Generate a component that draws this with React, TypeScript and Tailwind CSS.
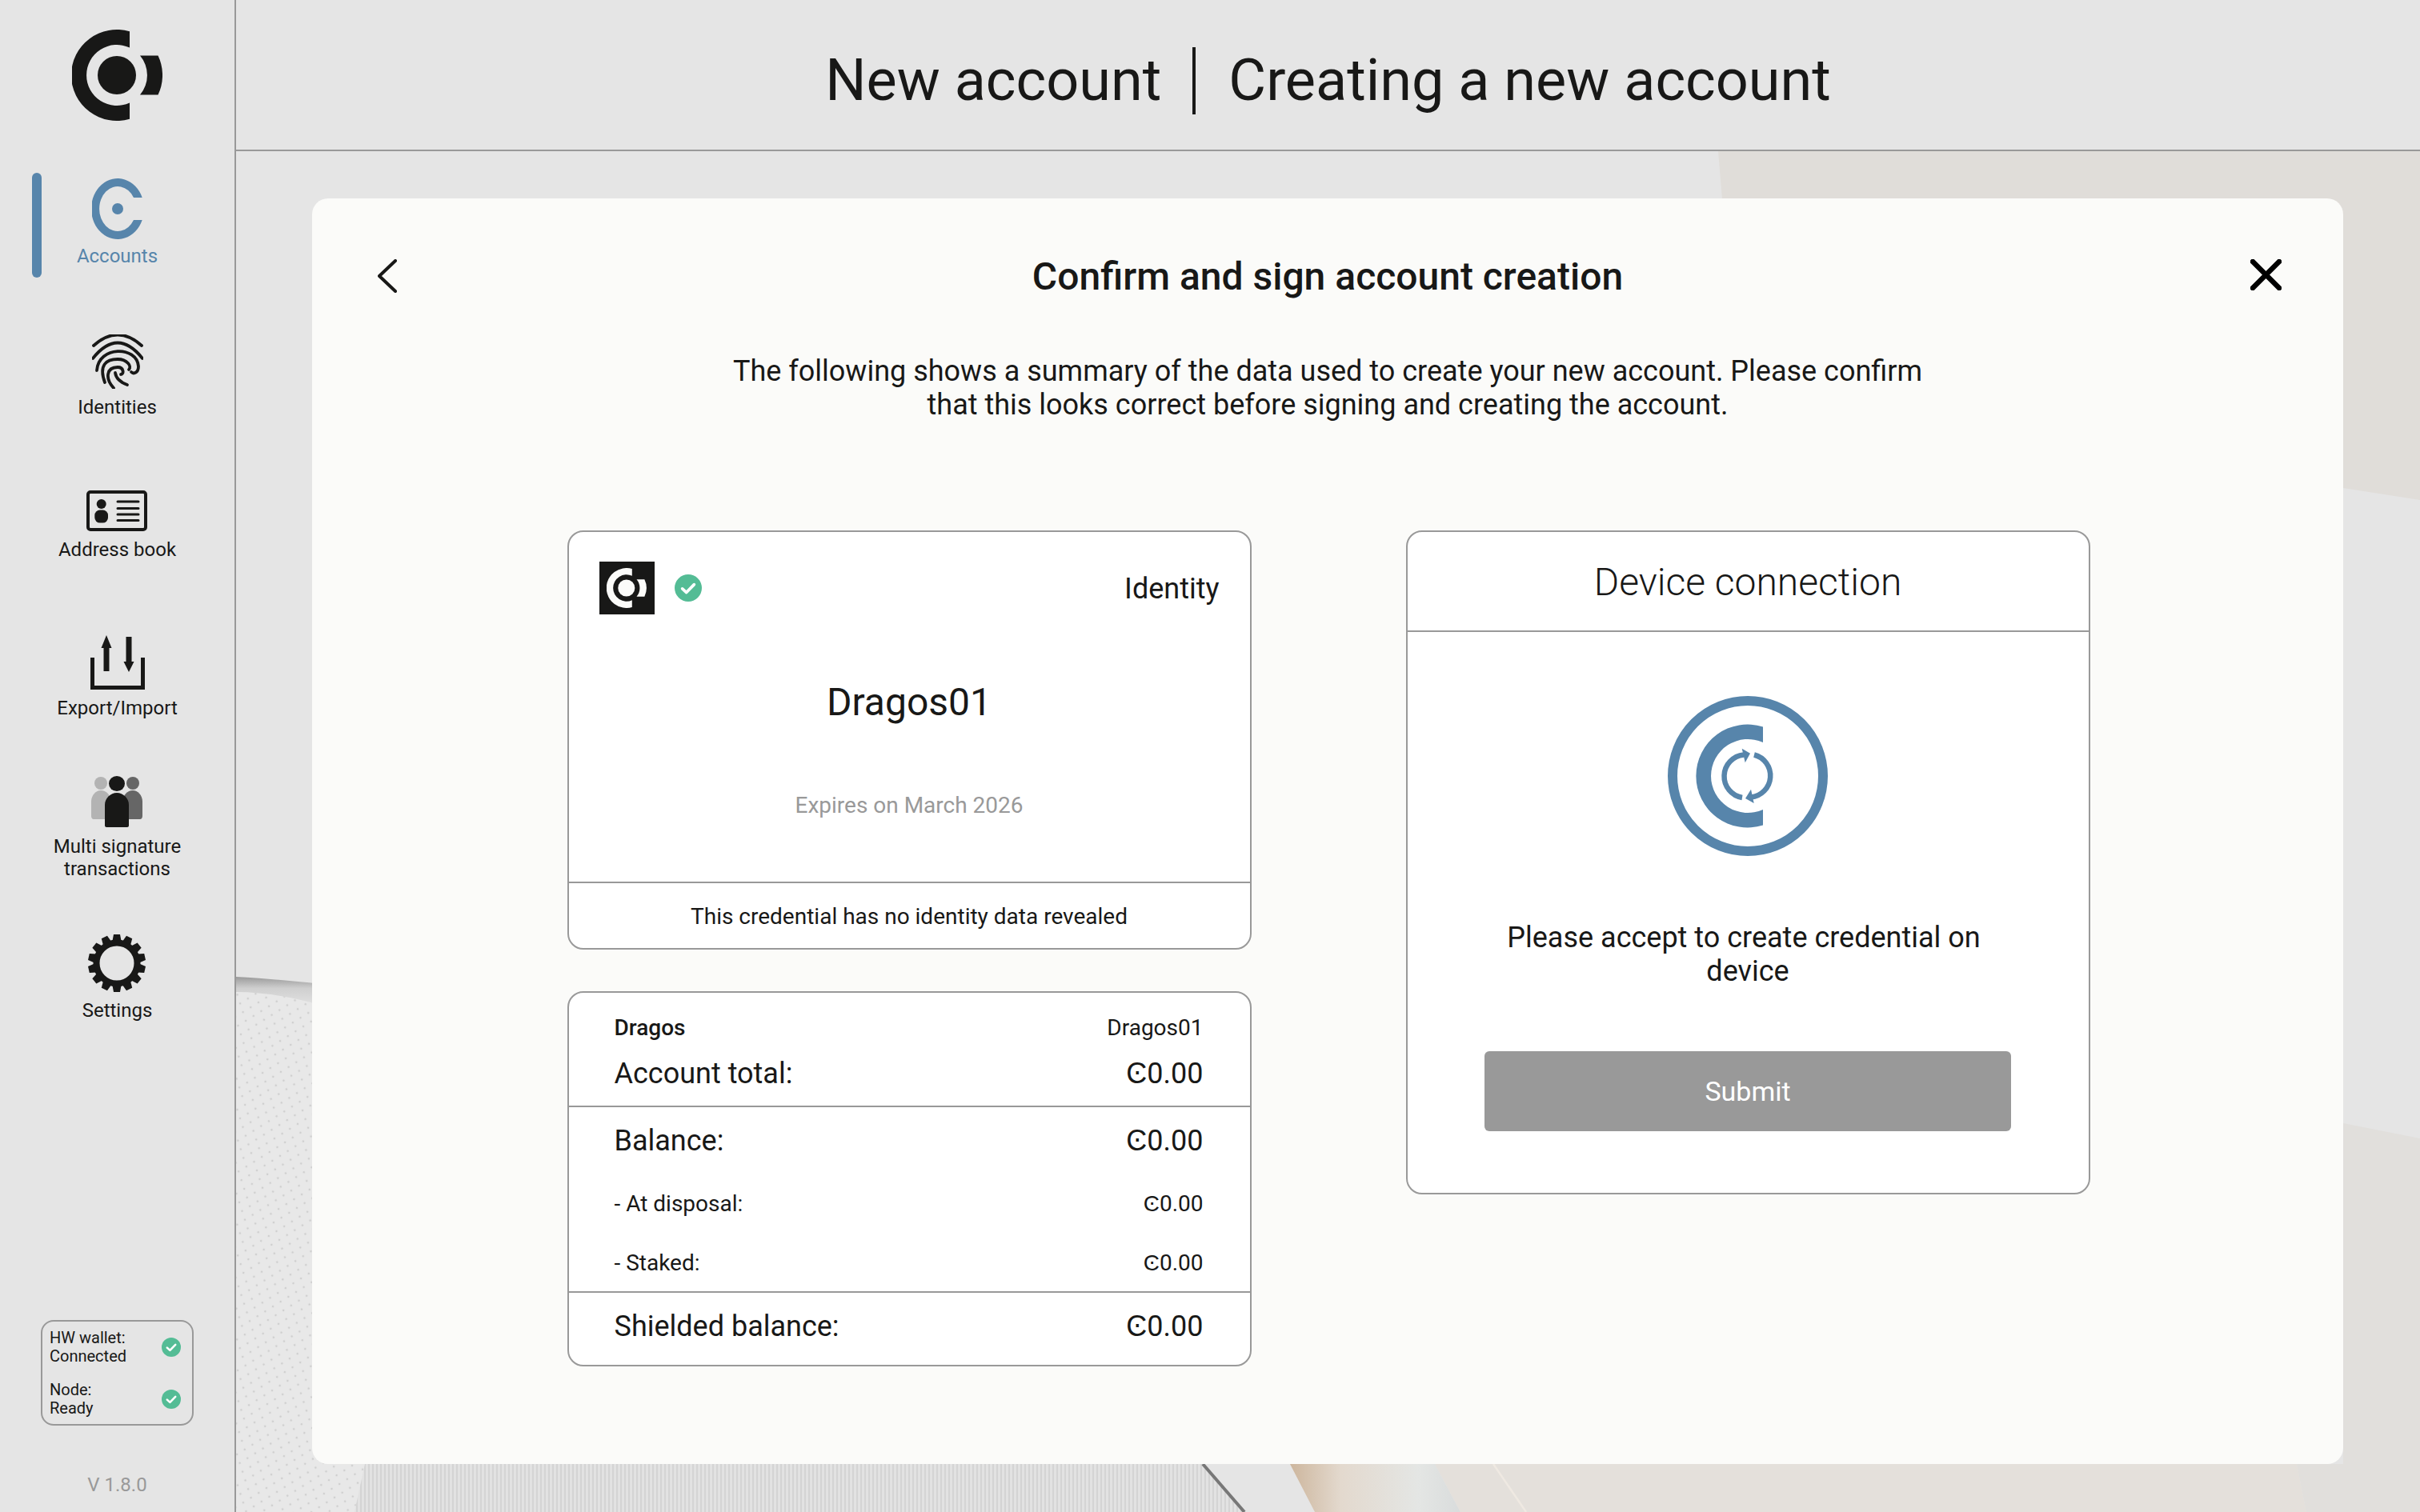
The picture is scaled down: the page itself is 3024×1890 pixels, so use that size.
import React from "react";

function Logo({ fill, className }: { fill: string; className: string }) {
  return (
    <svg viewBox="0 0 113 114" className={className} fill={fill}>
      <path d="M72 2.3A57 57 0 1 0 72 111.7V91.5A38 38 0 1 1 72 22.5Z" />
      <circle cx="56" cy="57" r="24" />
      <path d="M85 32.5H107.5A57 57 0 0 1 107.5 81.5H85A38 38 0 0 0 85 32.5Z" />
    </svg>
  );
}

function Check({ className }: { className: string }) {
  return (
    <svg viewBox="0 0 24 24" className={className}>
      <circle cx="12" cy="12" r="12" fill="#54bc95" />
      <path d="M6.8 12.6l3.6 3.3 6.8-7" fill="none" stroke="#fff" strokeWidth="2.6" strokeLinecap="round" strokeLinejoin="round" />
    </svg>
  );
}

function AccountsIcon() {
  return (
    <svg viewBox="0 0 64 76" className="w-[64px] h-[76px]" fill="#5785ab">
      <path d="M62.7 24A33 38 0 1 0 62.7 52H52A23 28 0 1 1 52 24Z" />
      <circle cx="32" cy="38" r="7" />
    </svg>
  );
}

function FingerprintIcon() {
  return (
    <svg viewBox="0 0 64 68" className="w-[64px] h-[68px]" fill="none" stroke="#181817" strokeWidth="3.8" strokeLinecap="round">
      <path d="M2 14Q32 -13 62 14" />
      <path d="M1 30Q32 -9 63 30" />
      <path d="M6 45C8 14 56 14 58 40C58 48 52 50 49 47" />
      <path d="M16 60C8 38 18 31 32 31C44 31 50 40 46 44" />
      <path d="M27 67C16 55 18 41 32 41C40 41 40 50 36 50" />
      <path d="M44 63C36 60 30 56 29 48" />
    </svg>
  );
}

function AddressIcon() {
  return (
    <svg viewBox="0 0 76 51" className="w-[76px] h-[51px]" fill="#181817">
      <rect x="2" y="2" width="72" height="47" rx="3" fill="none" stroke="#181817" strokeWidth="4" />
      <circle cx="18.7" cy="17" r="6" />
      <rect x="10.3" y="24.6" width="16.7" height="16" rx="6.5" />
      <path d="M39 14H65M39 22.5H65M39 30H65M39 37.5H65" stroke="#181817" strokeWidth="3" strokeLinecap="round" />
    </svg>
  );
}

function ExportIcon() {
  return (
    <svg viewBox="0 0 68 68" className="w-[68px] h-[68px]" fill="#181817">
      <path d="M2.5 28V65.5H65.5V28" fill="none" stroke="#181817" strokeWidth="5" />
      <path d="M20 0L26.5 16H23.5V45H16.5V16H13.5Z" />
      <path d="M48 46L41.5 33H44.5V2H51.5V33H54.5Z" />
    </svg>
  );
}

function MultiIcon() {
  return (
    <svg viewBox="0 0 64 64" className="w-[64px] h-[64px]">
      <ellipse cx="12" cy="9" rx="8" ry="8" fill="#b3b3b3" />
      <path d="M0 50V32C0 24 6 18 12 18C19 18 24 24 24 30V54H3C1 54 0 52 0 50Z" fill="#b3b3b3" />
      <ellipse cx="52" cy="9" rx="8" ry="8" fill="#666" />
      <path d="M64 50V32C64 24 58 18 52 18C45 18 40 24 40 30V54H61C63 54 64 52 64 50Z" fill="#666" />
      <ellipse cx="32" cy="9.5" rx="10" ry="9.5" fill="#181817" />
      <path d="M17 36C17 28 24 21 32 21C40 21 47 28 47 36V62C47 63 46 64 45 64H19C18 64 17 63 17 62Z" fill="#181817" />
    </svg>
  );
}

const teeth = Array.from({ length: 14 }, (_, i) => (i * 360) / 14);

function GearIcon() {
  return (
    <svg viewBox="0 0 72 72" className="w-[72px] h-[72px]">
      <circle cx="36" cy="36" r="25.5" fill="none" stroke="#181817" strokeWidth="8" />
      {teeth.map((a) => (
        <path key={a} d="M30.5 8L32 0H40L41.5 8Z" fill="#181817" transform={`rotate(${a} 36 36)`} />
      ))}
    </svg>
  );
}

function DeviceLogo() {
  return (
    <svg viewBox="0 0 200 200" className="w-[200px] h-[200px]" fill="#5785ab">
      <circle cx="100" cy="100" r="94" fill="none" stroke="#5785ab" strokeWidth="12" />
      <path d="M119 38.4A64.5 64.5 0 1 0 119 161.6V141.9A46 46 0 1 1 119 58.1Z" />
      <path d="M93 127A27 27 0 0 1 95 73.5" fill="none" stroke="#5785ab" strokeWidth="6.5" />
      <path d="M108 73.5A27 27 0 0 1 104 126.5" fill="none" stroke="#5785ab" strokeWidth="6.5" />
      <path d="M103 71.7L92.7 65.7L96.7 83.3Z" />
      <path d="M97 128L104 116.7L107.7 134Z" />
    </svg>
  );
}

function Background() {
  return (
    <svg viewBox="295 0 2729 1890" className="absolute inset-0 w-full h-full">
      <defs>
        <pattern id="dots" width="14" height="18" patternUnits="userSpaceOnUse" patternTransform="rotate(20)">
          <rect width="14" height="18" fill="#e8e8e8" />
          <circle cx="4" cy="5" r="1.3" fill="#cfcfcf" />
          <circle cx="11" cy="14" r="1.3" fill="#cfcfcf" />
        </pattern>
        <pattern id="stripes" width="5" height="40" patternUnits="userSpaceOnUse">
          <rect width="5" height="40" fill="#e2e2e2" />
          <rect width="2" height="40" fill="#d4d4d4" />
        </pattern>
        <linearGradient id="band" x1="0" y1="0" x2="0" y2="1">
          <stop offset="0" stopColor="#9a9a9a" />
          <stop offset="0.35" stopColor="#cfcfcf" />
          <stop offset="1" stopColor="#e6e6e6" />
        </linearGradient>
        <linearGradient id="fold" x1="0" y1="0" x2="1" y2="0">
          <stop offset="0" stopColor="#cdb69d" />
          <stop offset="0.3" stopColor="#e3d9ce" />
          <stop offset="0.75" stopColor="#e4e6e4" />
          <stop offset="1" stopColor="#d9dcdc" />
        </linearGradient>
      </defs>
      <path d="M295 1221Q350 1224 420 1232V1890H295Z" fill="url(#dots)" />
      <path d="M295 1221Q350 1224 420 1232V1262Q350 1240 295 1240Z" fill="url(#band)" />
      <path d="M420 1830H456L443 1890H420Z" fill="url(#dots)" />
      <path d="M456 1830H1503L1555 1890H443Z" fill="url(#stripes)" />
      <path d="M1503 1830L1555 1890" stroke="#777777" strokeWidth="4" fill="none" />
      <path d="M1612 1830H1793L1825 1890H1643Z" fill="url(#fold)" />
      <path d="M1793 1830H2870L2882 1890H1825Z" fill="#e4e0db" />
      <path d="M1866 1830L1907 1890" stroke="#efe9e2" strokeWidth="2.5" fill="none" />
      <path d="M2147 189H3024V625L2928 610H2182Z" fill="#e0ddd9" />
      <path d="M2928 1404L3024 1423V1890H2882L2870 1830H2928Z" fill="#e1dfdc" />
    </svg>
  );
}

const amount = "\u03FE0.00";

export default function App() {
  return (
    <div className="flex w-[3024px] h-[1890px] overflow-hidden bg-[#e5e5e5] text-[#181817] font-['Roboto',sans-serif]">
      <nav className="flex flex-col items-center w-[295px] shrink-0 border-r-2 border-[#999999] text-[24px] leading-[28px] text-center">
        <Logo fill="#181817" className="mt-[37px] w-[113px] h-[114px]" />
        <div className="relative flex flex-col items-center w-full mt-[72px] text-[#5785ab]">
          <div className="absolute left-[40px] top-[-7px] w-[12px] h-[131px] rounded-[6px] bg-[#5785ab]" />
          <AccountsIcon />
          <span className="mt-[7px]">Accounts</span>
        </div>
        <div className="flex flex-col items-center mt-[84px]">
          <FingerprintIcon />
          <span className="mt-[9px]">Identities</span>
        </div>
        <div className="flex flex-col items-center mt-[90px]">
          <AddressIcon />
          <span className="mt-[9px]">Address book</span>
        </div>
        <div className="flex flex-col items-center mt-[93px]">
          <ExportIcon />
          <span className="mt-[9px]">Export/Import</span>
        </div>
        <div className="flex flex-col items-center mt-[71px]">
          <MultiIcon />
          <span className="mt-[10px]">Multi signature<br />transactions</span>
        </div>
        <div className="flex flex-col items-center mt-[68px]">
          <GearIcon />
          <span className="mt-[9px]">Settings</span>
        </div>
        <div className="mt-auto flex flex-col gap-[20px] w-[191px] h-[132px] pt-[9px] pl-[9px] pr-[14px] border-2 border-[#999999] rounded-[16px] text-[20px] leading-[22.5px] text-left">
          <div className="flex items-center justify-between">
            <span>HW wallet:<br />Connected</span>
            <Check className="w-[24px] h-[24px]" />
          </div>
          <div className="flex items-center justify-between">
            <span>Node:<br />Ready</span>
            <Check className="w-[24px] h-[24px]" />
          </div>
        </div>
        <div className="mt-[59px] mb-[19px] text-[24px] leading-[30px] text-[#999999]">V 1.8.0</div>
      </nav>

      <main className="relative flex flex-col flex-1 min-w-0">
        <Background />
        <header className="relative flex items-center justify-center h-[189px] shrink-0 bg-[#e5e5e5] border-b-2 border-[#999999] text-[72px] leading-[84px] pt-[15px]">
          <span>New account</span>
          <span className="w-[4px] h-[84px] ml-[39px] mr-[41px] bg-[#181817]" />
          <span>Creating a new account</span>
        </header>

        <section className="relative flex flex-col flex-1 ml-[95px] mr-[96px] mt-[59px] mb-[60px] rounded-[20px] bg-[#fbfbf9]">
          <div className="grid grid-cols-[1fr_auto_1fr] items-center h-[72px] mt-[61px] px-[77px]">
            <svg viewBox="0 0 24 42" className="ml-[5px] w-[24px] h-[42px]" fill="none" stroke="#181817" strokeWidth="4" strokeLinecap="round" strokeLinejoin="round">
              <path d="M22 2L2 21L22 40" />
            </svg>
            <h1 className="pt-[2px] text-[48px] leading-[70px] font-medium">Confirm and sign account creation</h1>
            <svg viewBox="0 0 39 39" className="-mt-[3px] w-[39px] h-[39px] justify-self-end" fill="none" stroke="#000000" strokeWidth="6.5" strokeLinecap="round">
              <path d="M3 3L36 36M36 3L3 36" />
            </svg>
          </div>
          <p className="mt-[62px] text-center text-[36px] leading-[42px]">
            The following shows a summary of the data used to create your new account. Please confirm<br />
            that this looks correct before signing and creating the account.
          </p>

          <div className="flex justify-center gap-[193px] mt-[136px] ml-[2px]">
            <div className="flex flex-col gap-[52px] w-[855px]">
              <div className="flex flex-col h-[524px] border-2 border-[#999999] rounded-[20px] bg-white">
                <div className="flex items-center justify-between mt-[37px] pl-[38px] pr-[38px]">
                  <div className="flex items-center gap-[25px]">
                    <div className="flex items-center justify-center w-[69px] h-[66px] bg-[#181817]">
                      <Logo fill="#fbfbf9" className="w-[50px] h-[50px]" />
                    </div>
                    <Check className="w-[34px] h-[34px]" />
                  </div>
                  <span className="pt-[1px] text-[36px] leading-[42px]">Identity</span>
                </div>
                <div className="mt-[82px] text-center text-[48px] leading-[56px]">Dragos01</div>
                <div className="mt-[84px] text-center text-[28px] leading-[34px] text-[#999999]">Expires on March 2026</div>
                <div className="flex items-center justify-center flex-1 mt-[78px] pt-[2px] border-t-2 border-[#999999] text-[28px]">
                  This credential has no identity data revealed
                </div>
              </div>

              <div className="flex flex-col h-[469px] border-2 border-[#999999] rounded-[20px] bg-white">
                <div className="h-[143px] shrink-0 border-b-2 border-[#999999] pt-[27px] pl-[57px] pr-[58px]">
                  <div className="flex justify-between text-[28px] leading-[34px]">
                    <span className="font-medium">Dragos</span>
                    <span>Dragos01</span>
                  </div>
                  <div className="flex justify-between mt-[19px] text-[36px] leading-[42px]">
                    <span>Account total:</span>
                    <span>{amount}</span>
                  </div>
                </div>
                <div className="h-[232px] shrink-0 border-b-2 border-[#999999] pt-[21px] pl-[57px] pr-[58px]">
                  <div className="flex justify-between text-[36px] leading-[42px]">
                    <span>Balance:</span>
                    <span>{amount}</span>
                  </div>
                  <div className="flex justify-between mt-[41px] text-[28px] leading-[34px]">
                    <span>- At disposal:</span>
                    <span>{amount}</span>
                  </div>
                  <div className="flex justify-between mt-[40px] text-[28px] leading-[34px]">
                    <span>- Staked:</span>
                    <span>{amount}</span>
                  </div>
                </div>
                <div className="flex justify-between pt-[21px] pl-[57px] pr-[58px] text-[36px] leading-[42px]">
                  <span>Shielded balance:</span>
                  <span>{amount}</span>
                </div>
              </div>
            </div>

            <div className="flex flex-col items-center w-[855px] h-[830px] border-2 border-[#999999] rounded-[20px] bg-white">
              <div className="flex items-center justify-center w-full h-[125px] shrink-0 pt-[3px] border-b-2 border-[#999999] text-[48px] font-light">
                Device connection
              </div>
              <div className="mt-[80px]">
                <DeviceLogo />
              </div>
              <p className="mt-[81px] text-center text-[36px] leading-[42px]">
                <span className="block pr-[10px]">Please accept to create credential on</span>
                <span className="block">device</span>
              </p>
              <button className="mt-[79px] w-[658px] h-[100px] rounded-[6px] bg-[#999999] text-white text-[34px] font-normal">
                Submit
              </button>
            </div>
          </div>
        </section>
      </main>
    </div>
  );
}
